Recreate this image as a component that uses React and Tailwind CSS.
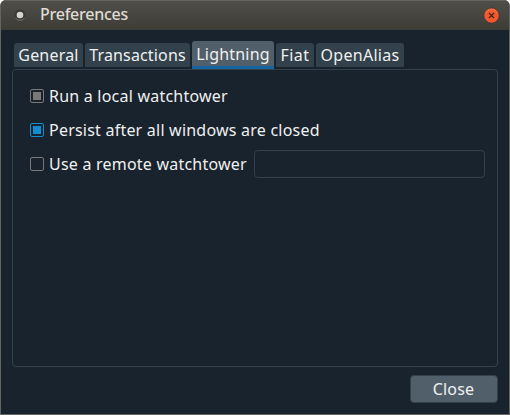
const tabs = [
  { label: "General", box: "w-[69px]", text: "tracking-[0.2px]" },
  { label: "Transactions", box: "w-[105px]", text: "tracking-[0.15px]" },
  { label: "Lightning", box: "w-[82px]", text: "tracking-[0.2px]", active: true },
  { label: "Fiat", box: "w-[38px]", text: "tracking-[0.4px]" },
  { label: "OpenAlias", box: "w-[88px]", text: "tracking-[0.3px]" },
];

function Check({ state }) {
  const border = state === "on" ? "border-[#148cd2]" : "border-[#787878]";
  const fill = state === "on" ? "bg-[#148cd2]" : state === "disabled" ? "bg-[#787878]" : "";
  return (
    <span className={"flex size-3.5 shrink-0 items-center justify-center rounded-[2px] border " + border}>
      <span className={"size-2 " + fill} />
    </span>
  );
}

function Option({ state, label, children }) {
  return (
    <div className="flex h-[34px] items-center">
      <Check state={state} />
      <span className="ml-[5px] leading-5 tracking-[0.22px]">{label}</span>
      {children}
    </div>
  );
}

export default function App() {
  return (
    <div className="h-[415px] w-[510px] bg-white">
      <div className="flex h-full flex-col overflow-hidden rounded-t-[6px] border-x border-b border-[#65645f] bg-[#19232d] font-['Noto_Sans','Open_Sans',sans-serif] text-[16px] whitespace-nowrap text-[#f0f0f0]">
        <header className="flex h-[30px] shrink-0 items-center border-t border-[#65645f] bg-linear-to-b from-[#504e48] to-[#3d3c37] pr-[9px] pl-[13px]">
          <svg className="-mt-px" width="12" height="12" viewBox="0 0 12 12">
            <circle cx="6" cy="6" r="5.5" fill="#3a3934" />
            <path d="M1.5 9A5.5 5.5 0 0 0 10.5 9" fill="none" stroke="#777670" />
            <circle cx="6" cy="6" r="3.3" fill="#d5d3ce" />
          </svg>
          <span className="mb-[4px] ml-[14px] text-[16px] leading-5 font-medium tracking-[-0.25px] text-[#dfdbd2]">Preferences</span>
          <svg className="-mt-px ml-auto" width="17" height="17" viewBox="0 0 17 17">
            <circle cx="8.5" cy="8.5" r="7.6" fill="#f0592b" stroke="#38342f" strokeWidth=".6" />
            <path d="M3 6A6 6 0 0 1 14 6" fill="none" stroke="#f58662" strokeWidth=".7" />
            <path d="M6 6l5 5M11 6l-5 5" stroke="#49241a" strokeWidth="1.3" />
          </svg>
        </header>
        <main className="flex flex-1 flex-col px-[11px] pt-[11px] pb-[11px]">
          <nav className="flex h-7 items-start gap-[2px] pl-[2px]">
            {tabs.map((t) => (
              <div
                key={t.label}
                className={
                  "flex justify-center rounded-t-[3px] " +
                  t.box +
                  (t.active
                    ? " h-7 border-b-[3px] border-[#1464a0] bg-[#505f69] pt-[3px]"
                    : " mt-[2px] h-6 bg-[#32414b] pt-[2px]")
                }
              >
                <span className={"leading-5 " + t.text}>{t.label}</span>
              </div>
            ))}
          </nav>
          <section className="h-[298px] rounded-[4px] border border-[#32414b] pt-[9px] pr-[12px] pl-[17px]">
            <Option state="disabled" label="Run a local watchtower" />
            <Option state="on" label="Persist after all windows are closed" />
            <Option state="off" label="Use a remote watchtower">
              <input className="ml-auto h-7 w-[231px] rounded-[4px] border border-[#32414b] bg-[#19232d]" />
            </Option>
          </section>
          <button className="mt-2 flex h-7 w-[88px] items-center justify-center self-end rounded-[4px] border border-[#32414b] bg-[#505f69]">
            <span className="-ml-px leading-5 tracking-[0.2px]">Close</span>
          </button>
        </main>
      </div>
    </div>
  );
}
